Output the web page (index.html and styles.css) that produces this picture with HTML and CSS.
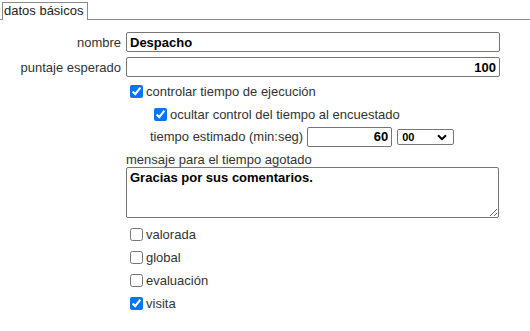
FILE: index.html
```html
<!DOCTYPE html>
<html lang="es">
<head>
<meta charset="UTF-8">
<title>datos básicos</title>
<link rel="stylesheet" href="styles.css">
</head>
<body>

<div class="tabs">
  <span class="tab">datos básicos</span>
</div>

<div class="form">
  <div class="row">
    <label class="lbl">nombre</label>
    <input class="txt" type="text" value="Despacho">
  </div>
  <div class="row">
    <label class="lbl">puntaje esperado</label>
    <input class="txt num" type="text" value="100">
  </div>

  <div class="field">
    <label class="check"><input type="checkbox" checked>controlar tiempo de ejecución</label>
    <div class="sub">
      <label class="check"><input type="checkbox" checked>ocultar control del tiempo al encuestado</label>
      <div class="time">
        <span>tiempo estimado (min:seg)</span>
        <input class="txt num short" type="text" value="60">
        <span class="sel">
          <select><option>00</option><option>15</option><option>30</option><option>45</option></select>
          <svg class="chev" width="10" height="7" viewBox="0 0 10 7"><path d="M1 1.2 5 5.2 9 1.2" fill="none" stroke="#000" stroke-width="2"/></svg>
        </span>
      </div>
    </div>
    <div class="msg">mensaje para el tiempo agotado</div>
    <textarea class="area">Gracias por sus comentarios.</textarea>
    <label class="check"><input type="checkbox">valorada</label>
    <label class="check"><input type="checkbox">global</label>
    <label class="check"><input type="checkbox">evaluación</label>
    <label class="check"><input type="checkbox" checked>visita</label>
  </div>
</div>

</body>
</html>
```

FILE: styles.css
```css
*{box-sizing:border-box}
body{margin:0;background:#fff;color:#333;font-family:"Liberation Sans",Arial,sans-serif;font-size:13px}
.tabs{height:20px;padding:2px 0 0 2px;border-bottom:1px solid #8a8a8a}
.tab{display:inline-block;height:18px;padding:0 3px 0 1px;line-height:16px;border:1px solid #8a8a8a;border-bottom:none;background:#fff;color:#222}
.form{width:500px;padding-top:12px}
.row{display:grid;grid-template-columns:121px 1fr;column-gap:5px;align-items:center;margin-bottom:5px}
.lbl{text-align:right}
.txt{height:20px;margin:0;padding:0 3px;border:1px solid #767676;border-radius:2px;font:bold 13px "Liberation Sans",Arial,sans-serif;color:#000}
.num{text-align:right}
.field{margin-left:126px}
.check{display:flex;align-items:center;height:23px}
.check input{margin:0 3px 0 4px;width:13px;height:13px}
.row + .field{margin-top:-2px}
.sub{padding-left:24px}
.time{display:flex;align-items:center;height:21px;gap:4px}
.short{width:85px}
.sel{position:relative;display:inline-block}
.sel select{appearance:none;-webkit-appearance:none;width:57px;height:16px;margin:0 0 0 1px;padding:0 0 0 4px;border:1px solid #767676;border-radius:2px;background:#fff;font:bold 11px "Liberation Sans",Arial,sans-serif;color:#000}
.chev{position:absolute;right:7px;top:5px;pointer-events:none}
.msg{height:15px;line-height:15px;margin-top:5px}
.area{display:block;width:373px;height:51px;margin:0 0 5px;padding:2px 3px;border:1px solid #767676;border-radius:2px;font:bold 13px "Liberation Sans",Arial,sans-serif;color:#000;resize:both}
```
